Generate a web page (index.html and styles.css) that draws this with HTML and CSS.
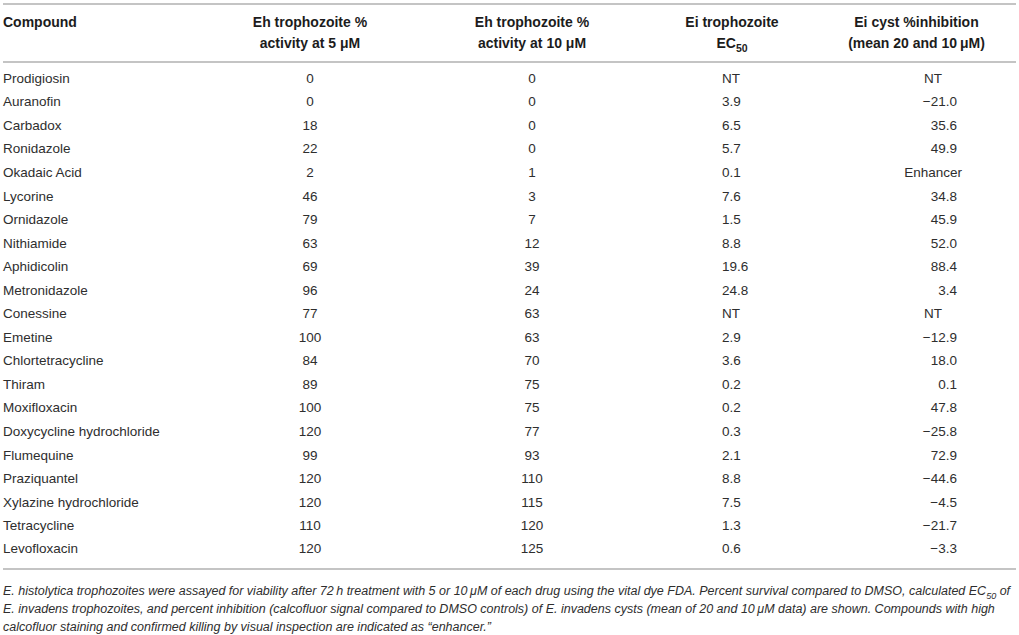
FILE: index.html
```html
<!DOCTYPE html>
<html lang="en">
<head>
  <meta charset="UTF-8" />
  <title>Drug screen against Entamoeba</title>
  <link rel="stylesheet" href="styles.css">
</head>
<body>
  <figure class="table-figure">
    <table class="data-table">
      <colgroup>
        <col class="col-name">
        <col class="col-eh5">
        <col class="col-eh10">
        <col class="col-ec50">
        <col class="col-cyst">
      </colgroup>
      <thead>
        <tr>
          <th class="left">Compound</th>
          <th>Eh trophozoite %<br>activity at 5 &mu;M</th>
          <th>Eh trophozoite %<br>activity at 10 &mu;M</th>
          <th>Ei trophozoite<br>EC<sub>50</sub></th>
          <th>Ei cyst %inhibition<br>(mean 20 and 10&thinsp;&mu;M)</th>
        </tr>
      </thead>
      <tbody>
        <tr><td>Prodigiosin</td><td>0</td><td>0</td><td class="ec">NT</td><td class="cyst nt">NT</td></tr>
        <tr><td>Auranofin</td><td>0</td><td>0</td><td class="ec">3.9</td><td class="cyst">&minus;21.0</td></tr>
        <tr><td>Carbadox</td><td>18</td><td>0</td><td class="ec">6.5</td><td class="cyst">35.6</td></tr>
        <tr><td>Ronidazole</td><td>22</td><td>0</td><td class="ec">5.7</td><td class="cyst">49.9</td></tr>
        <tr><td>Okadaic Acid</td><td>2</td><td>1</td><td class="ec">0.1</td><td class="cyst word">Enhancer</td></tr>
        <tr><td>Lycorine</td><td>46</td><td>3</td><td class="ec">7.6</td><td class="cyst">34.8</td></tr>
        <tr><td>Ornidazole</td><td>79</td><td>7</td><td class="ec">1.5</td><td class="cyst">45.9</td></tr>
        <tr><td>Nithiamide</td><td>63</td><td>12</td><td class="ec">8.8</td><td class="cyst">52.0</td></tr>
        <tr><td>Aphidicolin</td><td>69</td><td>39</td><td class="ec">19.6</td><td class="cyst">88.4</td></tr>
        <tr><td>Metronidazole</td><td>96</td><td>24</td><td class="ec">24.8</td><td class="cyst">3.4</td></tr>
        <tr><td>Conessine</td><td>77</td><td>63</td><td class="ec">NT</td><td class="cyst nt">NT</td></tr>
        <tr><td>Emetine</td><td>100</td><td>63</td><td class="ec">2.9</td><td class="cyst">&minus;12.9</td></tr>
        <tr><td>Chlortetracycline</td><td>84</td><td>70</td><td class="ec">3.6</td><td class="cyst">18.0</td></tr>
        <tr><td>Thiram</td><td>89</td><td>75</td><td class="ec">0.2</td><td class="cyst">0.1</td></tr>
        <tr><td>Moxifloxacin</td><td>100</td><td>75</td><td class="ec">0.2</td><td class="cyst">47.8</td></tr>
        <tr><td>Doxycycline hydrochloride</td><td>120</td><td>77</td><td class="ec">0.3</td><td class="cyst">&minus;25.8</td></tr>
        <tr><td>Flumequine</td><td>99</td><td>93</td><td class="ec">2.1</td><td class="cyst">72.9</td></tr>
        <tr><td>Praziquantel</td><td>120</td><td>110</td><td class="ec">8.8</td><td class="cyst">&minus;44.6</td></tr>
        <tr><td>Xylazine hydrochloride</td><td>120</td><td>115</td><td class="ec">7.5</td><td class="cyst">&minus;4.5</td></tr>
        <tr><td>Tetracycline</td><td>110</td><td>120</td><td class="ec">1.3</td><td class="cyst">&minus;21.7</td></tr>
        <tr><td>Levofloxacin</td><td>120</td><td>125</td><td class="ec">0.6</td><td class="cyst">&minus;3.3</td></tr>
      </tbody>
    </table>
    <figcaption class="caption">
      E. histolytica trophozoites were assayed for viability after 72&thinsp;h treatment with 5 or 10&thinsp;&mu;M of each drug using the vital dye FDA. Percent survival compared to DMSO, calculated EC<sub>50</sub> of<br>
      E. invadens trophozoites, and percent inhibition (calcofluor signal compared to DMSO controls) of E. invadens cysts (mean of 20 and 10&thinsp;&mu;M data) are shown. Compounds with high<br>
      calcofluor staining and confirmed killing by visual inspection are indicated as &ldquo;enhancer.&rdquo;
    </figcaption>
  </figure>
</body>
</html>
```

FILE: styles.css
```css
:root {
  --color-text: #2e2e2e;
  --color-head: #1c1c1c;
  --color-rule: #c4c4c4;
  --font-main: 'Liberation Sans', Arial, Helvetica, sans-serif;
}

* {
  box-sizing: border-box;
}

body {
  margin: 0;
  background: #ffffff;
  color: var(--color-text);
  font-family: var(--font-main);
  font-size: 13.5px;
}

.table-figure {
  margin: 0;
  padding: 3px 3px 0 3px;
}

.data-table {
  width: 1013px;
  border-collapse: collapse;
  border-top: 2px solid var(--color-rule);
  border-bottom: 2px solid var(--color-rule);
}

.col-name { width: 200px; }
.col-eh5 { width: 214px; }
.col-eh10 { width: 230px; }
.col-ec50 { width: 170px; }
.col-cyst { width: 199px; }

.data-table thead th {
  font-size: 14px;
  font-weight: 700;
  color: var(--color-head);
  line-height: 21px;
  padding: 7px 0 7px;
  text-align: center;
  vertical-align: top;
  border-bottom: 2px solid var(--color-rule);
}

.data-table thead th.left {
  text-align: left;
}

.data-table sub {
  font-size: 0.75em;
  line-height: 0;
  vertical-align: -0.35em;
}

.data-table tbody td {
  height: 23.55px;
  line-height: 16px;
  padding: 0;
  text-align: center;
  white-space: nowrap;
}

.data-table tbody tr:first-child td {
  padding-top: 5px;
  height: 28.55px;
}

.data-table tbody tr:last-child td {
  height: 31.55px;
  padding-bottom: 8px;
}

.data-table tbody td:first-child {
  text-align: left;
}

.data-table td.ec {
  text-align: left;
  padding-left: 75px;
}

.data-table td.cyst {
  text-align: right;
  padding-right: 59px;
}

.data-table td.cyst.word {
  padding-right: 54px;
}

.data-table td.cyst.nt {
  padding-right: 74px;
}

.caption {
  margin: 0;
  padding-top: 12px;
  font-size: 12.5px;
  font-style: italic;
  line-height: 18px;
  color: var(--color-text);
  white-space: nowrap;
}

.caption sub {
  font-size: 0.72em;
  line-height: 0;
}
```
